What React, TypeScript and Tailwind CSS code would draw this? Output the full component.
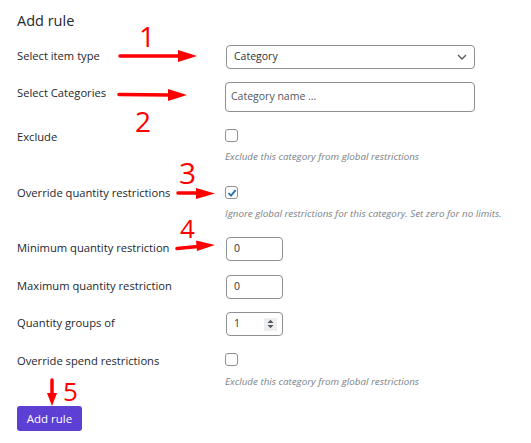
import React from "react";

const font = { fontFamily: '"Open Sans", "Liberation Sans", sans-serif' };

function Label({ children, pt = "pt-0" }: { children: React.ReactNode; pt?: string }) {
  return (
    <div className={`w-[209px] shrink-0 text-[11.2px] leading-[16px] font-medium text-[#23282d] ${pt}`}>
      {children}
    </div>
  );
}

function Box({ checked = false, className = "" }: { checked?: boolean; className?: string }) {
  return (
    <div
      className={`w-[13px] h-[13px] rounded-[3px] border border-[#8c8f94] bg-white flex items-center justify-center ${className}`}
    >
      {checked && (
        <svg width="10" height="10" viewBox="0 0 10 10">
          <path d="M1.5 5.2 L4 7.6 L8.6 2.2" fill="none" stroke="#2271b1" strokeWidth="1.8" />
        </svg>
      )}
    </div>
  );
}

function Hint({ children }: { children: React.ReactNode }) {
  return <div className="text-[9.8px] leading-[14px] italic text-[#7a7f85]">{children}</div>;
}

function Num({ value, spinner = false }: { value: string; spinner?: boolean }) {
  return (
    <div className="w-[57px] h-[24px] rounded-[4px] border border-[#8c8f94] bg-white flex items-center pl-[7px] pr-[5px] text-[10.5px] text-[#2c3338]">
      <span className="flex-1">{value}</span>
      {spinner && (
        <span className="w-[13px] h-[13px] bg-[#eeeeee] flex items-center justify-center">
          <svg width="7" height="10" viewBox="0 0 7 10">
            <path d="M0.5 4 L3.5 0.8 L6.5 4 Z M0.5 6 L3.5 9.2 L6.5 6 Z" fill="#50575e" />
          </svg>
        </span>
      )}
    </div>
  );
}

export default function App() {
  return (
    <main className="relative w-[531px] h-[443px] bg-white overflow-hidden" style={font}>
      <section className="flex flex-col px-[17px] pt-[11px]">
        <h2 className="text-[14.5px] leading-[20px] text-[#23282d]">Add rule</h2>

        <div className="flex mt-[14px]">
          <Label pt="pt-[3px]">Select item type</Label>
          <div className="w-[249px] h-[24px] rounded-[4px] border border-[#8c8f94] bg-white flex items-center pl-[7px] pr-[7px] text-[10.5px] text-[#2c3338]">
            <span className="flex-1">Category</span>
            <svg width="10" height="6" viewBox="0 0 10 6">
              <path d="M1 1 L5 5 L9 1" fill="none" stroke="#50575e" strokeWidth="1.3" />
            </svg>
          </div>
        </div>

        <div className="flex mt-[13px]">
          <Label pt="pt-[3px]">Select Categories</Label>
          <div className="w-[250px] h-[30px] rounded-[4px] border border-[#8c8f94] bg-white flex items-center pl-[5px] -ml-[1px] text-[10.5px] text-[#50575e]">
            Category name ...
          </div>
        </div>

        <div className="flex mt-[17px]">
          <Label>Exclude</Label>
          <div className="flex flex-col -ml-[1px]">
            <Box />
            <div className="mt-[8px]">
              <Hint>Exclude this category from global restrictions</Hint>
            </div>
          </div>
        </div>

        <div className="flex mt-[21px]">
          <Label>Override quantity restrictions</Label>
          <div className="flex flex-col -ml-[1px]">
            <Box checked className="mt-[1px]" />
            <div className="mt-[8px]">
              <Hint>Ignore global restrictions for this category. Set zero for no limits.</Hint>
            </div>
          </div>
        </div>

        <div className="flex mt-[16px]">
          <Label pt="pt-[3px]">Minimum quantity restriction</Label>
          <Num value="0" />
        </div>

        <div className="flex mt-[14px]">
          <Label pt="pt-[3px]">Maximum quantity restriction</Label>
          <Num value="0" />
        </div>

        <div className="flex mt-[13px]">
          <Label pt="pt-[3px]">Quantity groups of</Label>
          <Num value="1" spinner />
        </div>

        <div className="flex mt-[17px]">
          <Label>Override spend restrictions</Label>
          <div className="flex flex-col -ml-[1px]">
            <Box />
            <div className="mt-[9px]">
              <Hint>Exclude this category from global restrictions</Hint>
            </div>
          </div>
        </div>

        <button className="mt-[17px] self-start w-[65px] h-[25px] rounded-[3px] bg-[#5d3fd3] text-white text-[11.5px]">
          Add rule
        </button>
      </section>

      {/* annotations */}
      <svg className="absolute inset-0 pointer-events-none" width="531" height="443" viewBox="0 0 531 443">
        <g stroke="#ff0000" strokeWidth="3.5" strokeLinecap="round" fill="none">
          <path d="M120 56 L180 56" />
          <path d="M119 94.5 L170 95" />
          <path d="M178 193 L198 193" />
          <path d="M177 248.5 L198 246.5" />
          <path d="M52 380 L52 395" />
        </g>
        <g fill="#ff0000">
          <path d="M178 50 L197 56 L178 62 Z" />
          <path d="M168 89 L187 95 L168 101 Z" />
          <path d="M196 188 L215 193.5 L196 199 Z" />
          <path d="M196 240.5 L215 245 L197 251 Z" />
          <path d="M47 393 L52 406 L57 393 Z" />
        </g>
      </svg>
      <span className="absolute left-[139px] top-[22px] text-[28px] leading-none text-[#ff0000]">1</span>
      <span className="absolute left-[135px] top-[107px] text-[28px] leading-none text-[#ff0000]">2</span>
      <span className="absolute left-[179px] top-[158px] text-[30px] leading-none text-[#ff0000]">3</span>
      <span className="absolute left-[180px] top-[215px] text-[26px] leading-none text-[#ff0000]">4</span>
      <span className="absolute left-[63px] top-[378px] text-[26px] leading-none text-[#ff0000]">5</span>
    </main>
  );
}
